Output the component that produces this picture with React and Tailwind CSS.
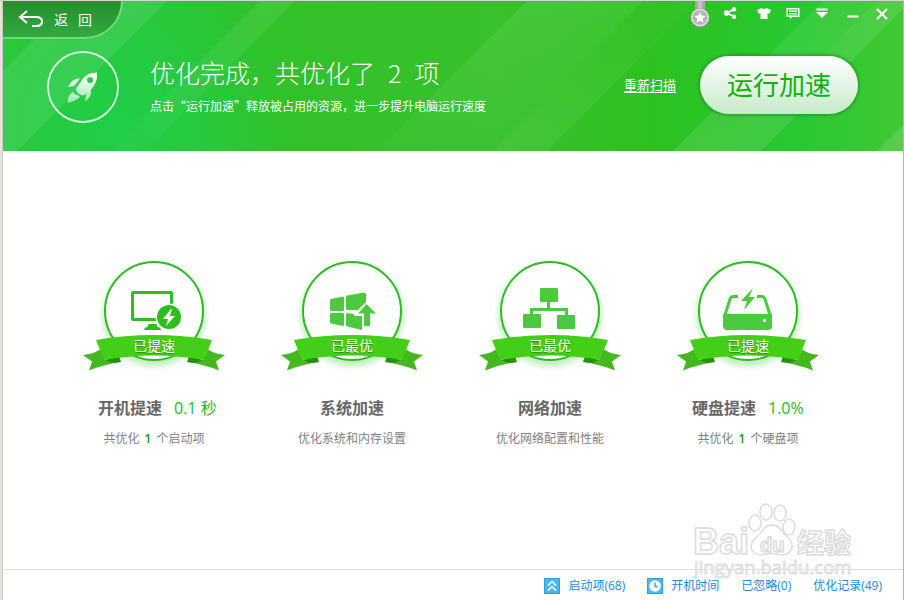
import React from 'react'

const cards = [
  { icon: 'boot', badge: '已提速', title: '开机提速', value: '0.1 秒', before: '共优化', count: 1, after: '个启动项' },
  { icon: 'system', badge: '已最优', title: '系统加速', desc: '优化系统和内存设置' },
  { icon: 'network', badge: '已最优', title: '网络加速', desc: '优化网络配置和性能' },
  { icon: 'disk', badge: '已提速', title: '硬盘提速', value: '1.0%', before: '共优化', count: 1, after: '个硬盘项' },
]

// drawn in the badge's own coordinates, circle centre is 71,53
const icons = {
  boot: (
    <g>
      <path d="M50 33h38a2 2 0 0 1 2 2v13h-3V36H51v24h28v3H50a2 2 0 0 1-2-2V35a2 2 0 0 1 2-2z" fill="#2bc01e" />
      <path d="M65.500 66h8l1 3q3 0 3.500 3H61q.5-3 3.500-3z" fill="#2bc01e" />
      <circle cx="86" cy="59" r="13.500" fill="#fff" />
      <circle cx="86" cy="59" r="12" fill="#2bc01e" />
      <path d="M88 51l-8 10h5l-2 7 9-10h-5l2-7z" fill="#fff" />
    </g>
  ),
  system: (
    <g fill="#4cca3f">
      <path d="M49 42l1-1 12-2.500 1 1V52l-1 1H50l-1-1zM65 38.500l1-1 17-3 2 1v8.500L77 52H66l-1-1zM50 55h12l1 1v11l-1 1-12-2.500-1-1V56zM65 56l1-1 7 1v2h8v14l-15-3.500-1-1z" />
      <path d="M85.500 46L95 55.500h-6V68h-6V55.500h-6z" />
    </g>
  ),
  network: (
    <g fill="#4cca3f">
      <rect x="61" y="30" width="18" height="14" rx="1" />
      <rect x="44" y="56" width="18" height="14" rx="1" />
      <rect x="78" y="57" width="18" height="14" rx="1" />
      <path d="M68 44h3v6h18v7h-3v-4H54v3h-3v-6h17z" />
    </g>
  ),
  disk: (
    <g>
      <path d="M46 56h49v12a4 4 0 0 1-4 4H50a4 4 0 0 1-4-4z" fill="#4cca3f" />
      <path d="M61 38.500h-5q-2 0-3 2.500l-5 16M80 38.500h5q2 0 3 2.500l5 16" fill="none" stroke="#4cca3f" strokeWidth="3" />
      <path d="M76 30L64 43h6l-3 9 11-13h-6z" fill="#4cca3f" />
      <circle cx="87.500" cy="62.500" r="1.700" fill="#fff" />
    </g>
  ),
}

const Badge = ({ icon, label }) => (
  <div className="relative w-[142px]">
    <svg viewBox="0 0 142 116" className="block w-full" aria-hidden="true">
      <defs>
        <radialGradient id={`${icon}-glow`}>
          <stop offset="0.840" stopColor="#4bd340" stopOpacity="0.350" />
          <stop offset="1" stopColor="#4bd340" stopOpacity="0" />
        </radialGradient>
      </defs>
      <circle cx="71" cy="57" r="56" fill={`url(#${icon}-glow)`} />
      <circle cx="71" cy="53" r="49" fill="#fff" stroke="#2bbd1f" strokeWidth="2" />
      {icons[icon]}
      <path d="M0 97q10-1 17-5.500L22 102l16 2q-16 2-32 8.500l3-9zM142 97q-10-1-17-5.500L120 102l-16 2q16 2 32 8.500l-3-9z" fill="#44b81f" />
      <path d="M22 102l14-4 2 6-9 1zM120 102l-14-4-2 6 9 1z" fill="#258f10" />
      <path d="M13 82q58-10 116 0l-8 20q-50-9-100 0z" fill="#43ce18" />
    </svg>
    <span className="absolute inset-x-0 top-[78px] text-center text-sm text-white [text-shadow:0_1px_1px_#2a900f]">{label}</span>
  </div>
)

const Card = ({ data }) => (
  <li className="flex flex-col items-center">
    <Badge icon={data.icon} label={data.badge} />
    <div className="mt-[22px] flex h-6 items-center gap-3">
      <h2 className="text-base font-bold leading-6 text-[#666]">{data.title}</h2>
      {data.value && (
        <span className="w-9 whitespace-nowrap text-base leading-6 text-[#1dbb1d]">{data.value}</span>
      )}
    </div>
    <p className="mt-2 text-xs leading-[22px] text-[#808080]">
      {data.desc || (
        <>
          {data.before}
          <b className="mx-[5px] font-semibold text-[#0a9a14]">{data.count}</b>
          {data.after}
        </>
      )}
    </p>
  </li>
)

const Stripes = () => (
  <svg viewBox="0 0 900 150" preserveAspectRatio="none" className="absolute inset-0 h-full w-full" aria-hidden="true">
    <defs>
      <linearGradient id="base">
        <stop offset="0" stopColor="#2dc636" />
        <stop offset="0.140" stopColor="#2bc63a" />
        <stop offset="0.330" stopColor="#32c128" />
        <stop offset="0.550" stopColor="#37c12c" />
        <stop offset="0.720" stopColor="#2dc11f" />
        <stop offset="0.880" stopColor="#27c832" />
        <stop offset="1" stopColor="#40c832" />
      </linearGradient>
      <radialGradient id="spot" gradientUnits="userSpaceOnUse" cx="110" cy="125" r="170">
        <stop offset="0" stopColor="#1fce47" />
        <stop offset="1" stopColor="#1fce47" stopOpacity="0" />
      </radialGradient>
      <linearGradient id="fade" x1="0" y1="0" x2="0" y2="1">
        <stop offset="0" stopColor="#fff" stopOpacity="0.080" />
        <stop offset="1" stopColor="#fff" stopOpacity="0.020" />
      </linearGradient>
      <linearGradient id="rise" x1="0" y1="1" x2="0" y2="0">
        <stop offset="0" stopColor="#fff" stopOpacity="0.070" />
        <stop offset="1" stopColor="#fff" stopOpacity="0.020" />
      </linearGradient>
    </defs>
    <rect width="900" height="150" fill="url(#base)" />
    <rect width="900" height="150" fill="url(#spot)" />
    <path d="M70 0h94L14 150H0V70z" fill="#fff" fillOpacity="0.090" />
    <path d="M257 0h35L142 150h-35z" fill="url(#fade)" />
    <path d="M524 0h116L490 150H374z" fill="url(#fade)" />
    <path d="M640 0h54L544 150h-54z" fill="url(#rise)" />
    <path d="M820 0h54L724 150h-54z" fill="#fff" fillOpacity="0.040" />
    <path d="M820 0h54L724 150h-54z" fill="url(#rise)" />
    <path d="M874 0h26v8L758 150h-34z" fill="#fff" fillOpacity="0.100" />
    <path d="M900 124v26h-26z" fill="#fff" fillOpacity="0.120" />
  </svg>
)

const WindowButton = ({ label, className, children }) => (
  <button type="button" aria-label={label} className={className}>
    <svg viewBox="0 0 14 14" className="block size-[14px]" fill="#fff">
      {children}
    </svg>
  </button>
)

const WindowBar = () => (
  <div className="absolute right-[14px] top-0 flex items-start">
    <button type="button" aria-label="勋章" className="mr-[13px]">
      <svg viewBox="0 0 20 28" className="block h-7 w-5">
        <path d="M5 0h10v10H5z" fill="#a9aaa9" />
        <path d="M8 0h4v10H8z" fill="#c2c2c2" />
        <circle cx="10" cy="17" r="9.800" fill="#8d918d" />
        <circle cx="10" cy="16.500" r="9" fill="#dedede" />
        <circle cx="10" cy="16.500" r="7.300" fill="#b5b5b5" />
        <path d="M10 11l1.700 3.600 3.900.5-2.900 2.700.8 3.900-3.500-1.900-3.500 1.900.8-3.900-2.900-2.700 3.900-.5z" fill="#fff" />
      </svg>
    </button>
    <div className="flex pt-[5px]">
      <WindowButton label="分享" className="mr-5">
        <path d="M3.500 7L11 3.500M3.500 7L11 10.500" stroke="#fff" strokeWidth="1.800" />
        <circle cx="3.500" cy="7" r="2.700" />
        <circle cx="11" cy="3.200" r="2.200" />
        <circle cx="11" cy="10.800" r="2.200" />
      </WindowButton>
      <WindowButton label="换肤" className="mr-[15px]">
        <path d="M4.500 2q2.500 2 5 0L14 4l-1.500 3.500-2-.3V13h-7V7.200l-2 .3L0 4z" />
      </WindowButton>
      <WindowButton label="反馈" className="mr-[15px]">
        <path fillRule="evenodd" d="M.5 2h13v9H6l-2 2v-2H.5zM2 3.500v6h10v-6z" />
        <path d="M3 4.500h8V6H3zM3 7h8v1.500H3z" />
      </WindowButton>
      <WindowButton label="菜单" className="mr-[17px]">
        <path d="M1.500 2.500h11v2h-11zM1 6h12l-6 6z" />
      </WindowButton>
      <WindowButton label="最小化" className="mr-[15px]">
        <path d="M1.500 9.500h11v2h-11z" />
      </WindowButton>
      <WindowButton label="关闭">
        <path d="M2 3l10 10M12 3L2 13" stroke="#fff" strokeWidth="2.200" />
      </WindowButton>
    </div>
  </div>
)

const Header = () => (
  <header className="relative h-[150px] text-white">
    <Stripes />
    <button
      type="button"
      className="absolute left-0 top-0 flex h-[38px] w-[120px] items-center rounded-br-[38px] border-b-2 border-r-2 border-[#6fdc72] bg-linear-to-b from-[#258e29] to-[#32a941] pl-[15px] text-sm"
    >
      <svg viewBox="0 0 26 20" className="mr-2.5 h-5 w-[26px]" fill="none" stroke="#fff" strokeWidth="2">
        <path d="M9 2L2 8l7 6M2 8h16q6 0 6 4.500T18 17h-4" />
      </svg>
      <span className="flex gap-2.5">
        <span>返</span>
        <span>回</span>
      </span>
    </button>
    <WindowBar />
    <div className="relative flex items-center pl-11 pr-[45px] pt-[50px]">
      <svg viewBox="0 0 72 72" className="size-[72px] shrink-0" aria-hidden="true">
        <defs>
          <linearGradient id="rocket" gradientUnits="userSpaceOnUse" x1="36" y1="24" x2="36" y2="52">
            <stop offset="0" stopColor="#fff" />
            <stop offset="1" stopColor="#9be8a8" />
          </linearGradient>
        </defs>
        <circle cx="36" cy="36" r="35" fill="none" stroke="#d9f6dc" strokeWidth="1.800" />
        <g fill="url(#rocket)">
          <path fillRule="evenodd" d="M50 21.500q-9 0-14 6l-7 10q0 5 6 7 6-1 10-7 6-7 5-16zM43 26a3 3 0 1 0 0 6 3 3 0 0 0 0-6z" />
          <path d="M33 27.500q-8-.5-12 8.500l6-1zM44 39q1 7-6 11.500l1-7z" />
          <path d="M26 41q-5 2-5.500 11 8-2 12.500-6-1-2-3-2-3-1-4-3z" />
        </g>
      </svg>
      <div className="-mt-1 ml-[31px] flex-1">
        <h1 className="flex gap-[13px] text-[25px] font-light leading-9">
          <span>优化完成，共优化了</span>
          <span>2</span>
          <span>项</span>
        </h1>
        <p className="mt-1.5 text-xs leading-5">点击“运行加速”释放被占用的资源，进一步提升电脑运行速度</p>
      </div>
      <a href="#rescan" className="-mt-1 mr-6 text-[13px] underline underline-offset-2">重新扫描</a>
      <button
        type="button"
        className="-mt-1 h-[58px] w-[158px] rounded-full bg-linear-to-b from-white to-[#c6eac9] pb-1 text-[26px] text-[#0bb30b] shadow-[0_0_2px_2px_#1e8a2080]"
      >
        运行加速
      </button>
    </div>
  </header>
)

const Watermark = () => (
  <svg viewBox="0 0 164 82" className="pointer-events-none absolute bottom-[18px] right-[47px] w-[164px]" fill="#fff" stroke="#dcdcdc" strokeWidth="1.500" strokeLinejoin="round" aria-hidden="true">
    <g className="font-['Liberation_Sans','Noto_Sans_CJK_SC',sans-serif] font-bold">
      <text x="1" y="54" fontSize="36">Bai</text>
      <ellipse cx="63" cy="23" rx="6" ry="8" />
      <ellipse cx="74" cy="12" rx="6" ry="8" />
      <ellipse cx="88" cy="13" rx="6" ry="8" />
      <ellipse cx="97" cy="27" rx="6" ry="8" />
      <path d="M80 25q7 0 12 9 9 6 8 13-2 8-10 8-10-3-20 0-10 0-11-8 0-7 9-13 5-9 12-9z" />
      <text x="68" y="52" fontSize="20">du</text>
      <text x="105" y="53" fontSize="27">经验</text>
    </g>
    <text x="2" y="74" fontSize="18.500" strokeWidth="1" className="font-['Open_Sans',sans-serif]">jingyan.baidu.com</text>
  </svg>
)

const FooterIcon = ({ children }) => (
  <svg viewBox="0 0 16 16" className="size-4" fill="none" stroke="#fff" strokeWidth="1.500" aria-hidden="true">
    <rect width="16" height="16" fill="#2f9fd8" stroke="none" />
    <rect x="1" y="1" width="14" height="14" fill="#4db9ea" stroke="none" />
    {children}
  </svg>
)

const Footer = () => (
  <footer className="flex h-[31px] items-center justify-end gap-[22px] border-t border-[#e0e0e0] pr-[21px] pt-px text-xs text-[#1b8be0]">
    <a href="#startup" className="flex items-center gap-2">
      <FooterIcon>
        <path d="M4 7.500l4-4 4 4M4 12.500l4-4 4 4" />
      </FooterIcon>
      启动项(68)
    </a>
    <a href="#boot-time" className="flex items-center gap-2">
      <FooterIcon>
        <circle cx="8" cy="8" r="5" fill="#fff" />
        <path d="M8 4.500V8.500h3" stroke="#3ba9dd" />
      </FooterIcon>
      开机时间
    </a>
    <a href="#ignored">已忽略(0)</a>
    <a href="#records">优化记录(49)</a>
  </footer>
)

const App = () => {
  return (
    <div
      lang="zh-CN"
      className="min-h-screen border-r border-t border-r-[#b5b5b5] border-t-[#d5d5d5] bg-[linear-gradient(to_right,#e8e8e2,#dededa_2px,#b8b8b8_3px)] pl-[3px] font-['Noto_Sans_CJK_SC',sans-serif]"
    >
      <div className="flex min-h-[calc(100vh-1px)] flex-col bg-white">
        <Header />
        <main className="flex-1 pl-[52px] pr-14 pt-[107px] font-['Open_Sans','Noto_Sans_CJK_SC',sans-serif]">
          <ul className="grid grid-cols-4">
            {cards.map((card) => (
              <Card key={card.icon} data={card} />
            ))}
          </ul>
        </main>
        <div className="relative font-['Open_Sans','Noto_Sans_CJK_SC',sans-serif]">
          <Footer />
          <Watermark />
        </div>
      </div>
    </div>
  )
}

export default App
